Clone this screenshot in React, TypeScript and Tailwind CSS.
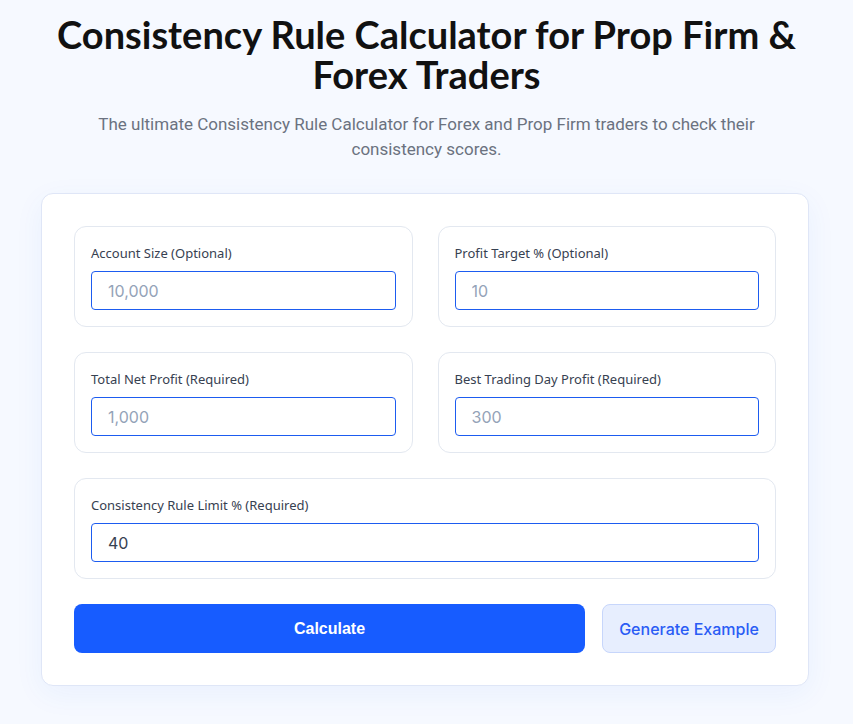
import { useState } from 'react';

const fields = [
    { label: 'Account Size (Optional)', placeholder: '10,000' },
    { label: 'Profit Target % (Optional)', placeholder: '10' },
    { label: 'Total Net Profit (Required)', placeholder: '1,000' },
    { label: 'Best Trading Day Profit (Required)', placeholder: '300' },
];

function Field({ label, placeholder, value, onChange }: { label: string; placeholder?: string; value?: string; onChange?: (v: string) => void }) {
    return (
        <div className="rounded-xl border border-[#e3e8f0] bg-white p-4">
            <label className="block h-5 text-[13px] leading-5 text-[#374151] font-['Noto_Sans',sans-serif] mb-2">{label}</label>
            <input
                type="text"
                placeholder={placeholder}
                value={value}
                onChange={(e) => onChange?.(e.target.value)}
                className="block h-[39px] w-full rounded-[4px] border border-[#1d5cf0] px-4 text-base text-[#374151] placeholder:text-[#94a3b8] outline-none font-['Inter',sans-serif]"
            />
        </div>
    );
}

export default function App() {
    const [limit, setLimit] = useState('40');

    return (
        <div className="min-h-screen bg-[#f6f9ff] pt-[14px] pb-10">
            <h1 className="mx-auto max-w-[800px] text-center text-[38px] leading-10 font-bold text-[#111111] font-['Lato',sans-serif]">
                Consistency Rule Calculator for Prop Firm &amp; Forex Traders
            </h1>
            <p className="mx-auto mt-[18px] max-w-[700px] text-center text-[17px] leading-[25px] text-[#6b7280] font-['Roboto',sans-serif]">
                The ultimate Consistency Rule Calculator for Forex and Prop Firm traders to check their consistency scores.
            </p>
            <div className="ml-[41px] mt-[31px] w-[768px] rounded-xl border border-[#dfe6f7] bg-white p-8 shadow-[0_8px_30px_rgba(37,99,235,0.06)]">
                <div className="grid grid-cols-2 gap-[25px]">
                    {fields.map((f) => (
                        <Field key={f.label} label={f.label} placeholder={f.placeholder} />
                    ))}
                    <div className="col-span-2">
                        <Field label="Consistency Rule Limit % (Required)" value={limit} onChange={setLimit} />
                    </div>
                </div>
                <div className="mt-[25px] flex gap-[17px]">
                    <button className="h-[49px] flex-1 rounded-lg bg-[#175cff] text-base font-bold text-white font-['Liberation_Sans',sans-serif]">
                        Calculate
                    </button>
                    <button className="h-[49px] w-[174px] rounded-lg border border-[#c7d6fb] bg-[#e7eefe] text-base font-medium text-[#2a5cf5] font-['Inter',sans-serif]">
                        Generate Example
                    </button>
                </div>
            </div>
        </div>
    );
}
